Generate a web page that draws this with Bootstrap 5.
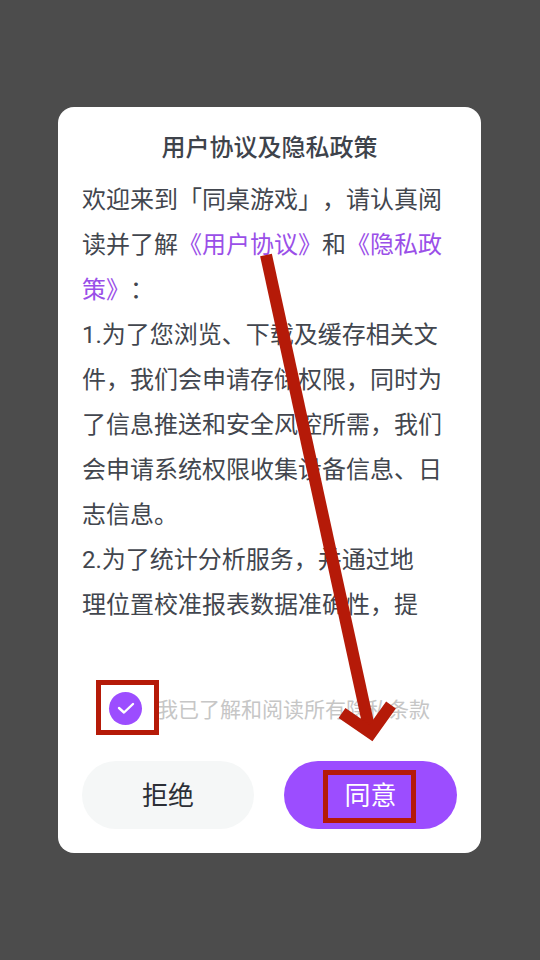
<!DOCTYPE html>
<html lang="zh">
<head>
<meta charset="utf-8">
<title>用户协议及隐私政策</title>
<link href="https://cdn.jsdelivr.net/npm/bootstrap@5.3.0/dist/css/bootstrap.min.css" rel="stylesheet">
<style>
html, body { height: 960px; margin: 0; overflow: hidden; }
body { background: #4c4c4c; font-family: Roboto, "Noto Sans CJK SC", sans-serif; position: relative; font-kerning: none; text-spacing-trim: space-all; font-feature-settings: "chws" 0, "palt" 0, "kern" 0; }
.stage { height: 960px; padding-top: 107px; }
.dialog-box { width: 423px; height: 746px; margin-left: 58px; border-radius: 16px; background: #fff; padding: 0 24px 24px; }
.dialog-title { height: 71px; padding-top: 22px; font-size: 24px; line-height: 38px; font-weight: 500; color: #3e434b; text-align: center; margin: 0; }
.dialog-text { height: 450px; font-size: 24px; line-height: 45px; color: #42464e; overflow: hidden; margin: 0 -4px 0 0; white-space: nowrap; }
.dialog-text a { color: #9a4fe8; text-decoration: none; }
.agree-row { height: 44px; margin: 58px 0 31px; padding-left: 27px; gap: 15px; font-size: 21px; color: #c6c6c6; white-space: nowrap; }
.agree-label { margin-top: 6px; }
.check-dot { width: 33px; height: 33px; border-radius: 50%; background: #9c4dff; flex: none; }
.action-row { gap: 30px; }
.pill-btn { height: 68px; border-radius: 34px; border: 0; font-size: 26px; padding: 2px 0 0; }
.pill-no { width: 172px; background: #f5f7f7; color: #2c2f36; }
.pill-yes { width: 173px; background: #9c4dff; color: #fff; }
.overlay-art { position: absolute; left: 0; top: 0; width: 540px; height: 960px; pointer-events: none; }
</style>
</head>
<body>
<div class="stage">
  <div class="dialog-box d-flex flex-column">
    <h1 class="dialog-title">用户协议及隐私政策</h1>
    <p class="dialog-text">欢迎来到「同桌游戏」，请认真阅<br>读并了解<a href="#">《用户协议》</a>和<a href="#">《隐私政<br>策》</a>：<br>1.为了您浏览、下载及缓存相关文<br>件，我们会申请存储权限，同时为<br>了信息推送和安全风控所需，我们<br>会申请系统权限收集设备信息、日<br>志信息。<br>2.为了统计分析服务，并通过地<br>理位置校准报表数据准确性，提</p>
    <div class="agree-row d-flex align-items-center">
      <span class="check-dot d-flex align-items-center justify-content-center">
        <svg width="18" height="14" viewBox="0 0 18 14" fill="none" stroke="#fff" stroke-width="2.4" stroke-linecap="round" stroke-linejoin="round"><path d="M2 7l5 4.500L16 3"/></svg>
      </span>
      <span class="agree-label">我已了解和阅读所有隐私条款</span>
    </div>
    <div class="action-row d-flex">
      <button type="button" class="btn pill-btn pill-no">拒绝</button>
      <button type="button" class="btn pill-btn pill-yes">同意</button>
    </div>
  </div>
</div>
<svg class="overlay-art" viewBox="0 0 540 960" fill="none" stroke="#b51a08">
  <rect x="98.5" y="682.5" width="58" height="50" stroke-width="5"/>
  <rect x="325.500" y="772.500" width="88" height="48" stroke-width="5"/>
  <path d="M266 255L370 732" stroke-width="12"/>
  <path d="M342 713L371 733L391 705" stroke-width="12"/>
</svg>
<script src="https://cdn.jsdelivr.net/npm/bootstrap@5.3.0/dist/js/bootstrap.bundle.min.js"></script>
</body>
</html>
